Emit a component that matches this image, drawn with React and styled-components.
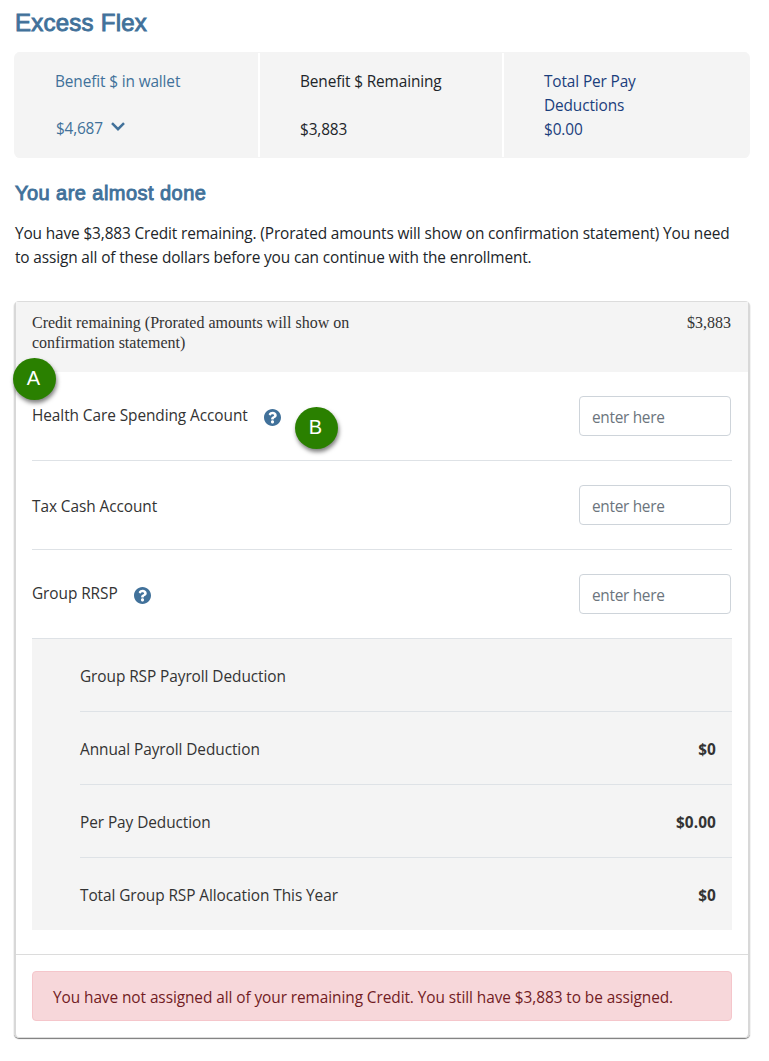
import React from "react";
import styled, { createGlobalStyle } from "styled-components";

const GlobalStyle = createGlobalStyle`
  *, *::before, *::after { box-sizing: border-box; }
  body {
    margin: 0;
    background: #fff;
    color: #212529;
    font: 15.4px/24px "Open Sans", "Noto Sans", sans-serif;
    letter-spacing: -0.13px;
  }
`;

const Page = styled.main`
  width: 769px;
  height: 1061px;
  overflow: hidden;
  padding: 8px 19px 0 14px;
`;

const Heading = styled.h1`
  margin: ${(p) => p.$margin};
  padding-left: 1px;
  color: #41719a;
  font: 400 ${(p) => p.$size}px/30px "Liberation Sans", Arial, sans-serif;
  letter-spacing: ${(p) => p.$spacing}px;
  -webkit-text-stroke: 0.9px currentColor;
`;

const Summary = styled.section`
  display: grid;
  grid-template-columns: 244px 242px 1fr;
  column-gap: 2px;
  width: 736px;
  height: 106px;
  border-radius: 6px;
  overflow: hidden;
  background: linear-gradient(#f4f4f4 0 1px, #fff 1px 105px, #f4f4f4 105px);
`;

const Tile = styled.div`
  display: flex;
  flex-direction: column;
  justify-content: space-between;
  padding: 18px 40px 16px ${(p) => p.$inset || 40}px;
  background: #f4f4f4;
  color: ${(p) => p.$color};
`;

const WalletAmount = styled.span`
  display: flex;
  align-items: center;
  gap: 8px;
  padding: 0 0 2px 1px;
  line-height: 23px;
  letter-spacing: -0.2px;
`;

const Chevron = styled.svg`
  width: 14px;
  height: 9px;
  margin-top: -4px;
`;

const Intro = styled.p`
  width: 735px;
  margin: 0 0 31px;
  padding-left: 1px;
`;

const Card = styled.section`
  position: relative;
  width: 736px;
  height: 737px;
  border: 1px solid #dcdcdc;
  border-left: 2px solid #d8d8d8;
  border-right: 2px solid #d8d8d8;
  border-radius: 5px;
  box-shadow: 0 1px 1px #777;
  color: #333;
  letter-spacing: -0.07px;
`;

const CardHeader = styled.header`
  display: flex;
  justify-content: space-between;
  height: 70px;
  padding: 11px 17px 11px 16px;
  background: #f4f4f4;
  font: 16px/20px "Liberation Serif", "Times New Roman", serif;
  letter-spacing: 0;
`;

const HeaderLabel = styled.span`
  width: 340px;
`;

const Rows = styled.div`
  height: 582px;
  padding: 0 16px;
`;

const AccountRow = styled.div`
  display: flex;
  align-items: center;
  justify-content: space-between;
  height: 89px;
  padding-right: 1px;
  border-bottom: 1px solid #dee2e6;
`;

const AccountLabel = styled.span`
  display: flex;
  align-items: center;
  gap: 16px;
  margin-top: ${(p) => p.$shift}px;
`;

const Help = styled.svg`
  width: 17px;
  height: 17px;
  margin-top: 3px;
`;

const AmountInput = styled.input`
  width: 152px;
  height: 40px;
  padding: 3px 12px 0;
  border: 1px solid #ced4da;
  border-radius: 4px;
  background: #fff;
  font: inherit;
  letter-spacing: -0.3px;
  &::placeholder { color: #6c757d; opacity: 1; }
`;

const Totals = styled.div`
  padding-left: 48px;
  background: #f4f4f4;
`;

const TotalRow = styled.div`
  display: flex;
  align-items: center;
  justify-content: space-between;
  height: ${(p) => (p.$last ? 72 : 73)}px;
  padding: 3px 16px 0 0;
  border-bottom: ${(p) => (p.$last ? 0 : 1)}px solid #dee2e6;
`;

const TotalValue = styled.strong`
  letter-spacing: 0.1px;
`;

const CardFooter = styled.footer`
  padding: 16px;
  border-top: 1px solid #dcdcdc;
`;

const Alert = styled.div`
  height: 50px;
  padding: 14px 20px;
  border: 1px solid #f5c6cb;
  border-radius: 4px;
  background: #f7d7da;
  color: #721c24;
`;

const Marker = styled.span`
  position: absolute;
  left: ${(p) => p.$left}px;
  top: ${(p) => p.$top}px;
  display: flex;
  align-items: center;
  justify-content: center;
  width: 43px;
  height: 42px;
  padding: 0 2px 3px 0;
  border-radius: 50%;
  background: #2a8000;
  box-shadow: 1px 3px 4px rgba(0, 0, 0, 0.5);
  color: #fff;
  font: 20px/24px "Liberation Sans", Arial, sans-serif;
  letter-spacing: 0;
`;

const HelpIcon = () => (
  <Help viewBox="8 8 496 496" fill="#41719a" aria-label="Help">
    <path d="M504 256c0 136.997-111.043 248-248 248S8 392.997 8 256C8 119.083 119.043 8 256 8s248 111.083 248 248zM262.655 90c-54.497 0-89.255 22.957-116.549 63.758-3.536 5.286-2.353 12.415 2.715 16.258l34.699 26.31c5.205 3.947 12.621 3.008 16.665-2.122 17.864-22.658 30.113-35.797 57.303-35.797 20.429 0 45.698 13.148 45.698 32.958 0 14.976-12.363 22.667-32.534 33.976C247.128 238.528 216 254.941 216 296v4c0 6.627 5.373 12 12 12h56c6.627 0 12-5.373 12-12v-1.333c0-28.462 83.186-29.647 83.186-106.667 0-58.002-60.165-102-116.531-102zM256 338c-25.365 0-46 20.635-46 46 0 25.364 20.635 46 46 46s46-20.636 46-46c0-25.365-20.635-46-46-46z" />
  </Help>
);

const accounts = [
  { name: "Health Care Spending Account", help: true, shift: 0 },
  { name: "Tax Cash Account", help: false, shift: 3 },
  { name: "Group RRSP", help: true, shift: -1 },
];

const totals = [
  ["Group RSP Payroll Deduction", ""],
  ["Annual Payroll Deduction", "$0"],
  ["Per Pay Deduction", "$0.00"],
  ["Total Group RSP Allocation This Year", "$0"],
];

export default function App() {
  return (
    <Page>
      <GlobalStyle />
      <Heading $size={24} $spacing={0.25} $margin="0 0 14px">Excess Flex</Heading>
      <Summary>
        <Tile $color="#41719a" $inset={41}>
          <span>Benefit $ in wallet</span>
          <WalletAmount>
            $4,687
            <Chevron viewBox="0 0 14 9" fill="none" stroke="currentColor" strokeWidth="2.5">
              <path d="M1 1.2 7 7.2 13 1.2" />
            </Chevron>
          </WalletAmount>
        </Tile>
        <Tile $color="#212529">
          <span>Benefit $ Remaining</span>
          <span>$3,883</span>
        </Tile>
        <Tile $color="#1b3e7c">
          <span>Total Per Pay<br />Deductions</span>
          <span>$0.00</span>
        </Tile>
      </Summary>
      <Heading as="h2" $size={20} $spacing={0.45} $margin="20px 0 14px">You are almost done</Heading>
      <Intro>
        You have $3,883 Credit remaining. (Prorated amounts will show on confirmation statement) You need<br />
        to assign all of these dollars before you can continue with the enrollment.
      </Intro>
      <Card>
        <CardHeader>
          <HeaderLabel>Credit remaining (Prorated amounts will show on confirmation statement)</HeaderLabel>
          <span>$3,883</span>
        </CardHeader>
        <Rows>
          {accounts.map((a) => (
            <AccountRow key={a.name}>
              <AccountLabel $shift={a.shift}>
                {a.name}
                {a.help && <HelpIcon />}
              </AccountLabel>
              <AmountInput placeholder="enter here" aria-label={a.name} />
            </AccountRow>
          ))}
          <Totals>
            {totals.map(([label, value], i) => (
              <TotalRow key={label} $last={i === totals.length - 1}>
                <span>{label}</span>
                <TotalValue>{value}</TotalValue>
              </TotalRow>
            ))}
          </Totals>
        </Rows>
        <CardFooter>
          <Alert>You have not assigned all of your remaining Credit. You still have $3,883 to be assigned.</Alert>
        </CardFooter>
        <Marker $left={-3} $top={56}>A</Marker>
        <Marker $left={279} $top={105}>B</Marker>
      </Card>
    </Page>
  );
}
